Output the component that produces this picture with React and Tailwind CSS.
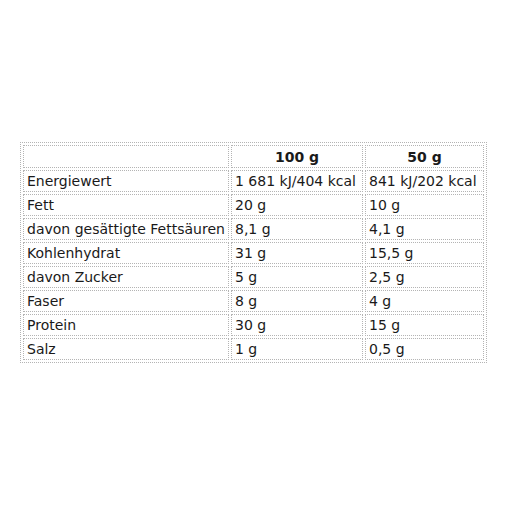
import React from "react";

const rows = [
  ["Energiewert", "1 681 kJ/404 kcal", "841 kJ/202 kcal"],
  ["Fett", "20 g", "10 g"],
  ["davon gesättigte Fettsäuren", "8,1 g", "4,1 g"],
  ["Kohlenhydrat", "31 g", "15,5 g"],
  ["davon Zucker", "5 g", "2,5 g"],
  ["Faser", "8 g", "4 g"],
  ["Protein", "30 g", "15 g"],
  ["Salz", "1 g", "0,5 g"],
];

const cell =
  "border border-dotted border-[#b4b4b4] px-[3px] py-0 leading-[18px] whitespace-nowrap";

const App = () => {
  return (
    <div
      className="w-[512px] h-[512px] bg-white pt-[142px] pl-[20px] text-[14px] text-[#1a1a1a]"
      style={{ fontFamily: '"DejaVu Sans", Verdana, sans-serif' }}
    >
      <table className="w-[467px] border border-dotted border-[#b4b4b4] border-separate border-spacing-[2px]">
        <tbody>
          <tr>
            <td className={`${cell} w-[206px] h-[23px]`}></td>
            <td className={`${cell} w-[132px] h-[23px] text-center font-bold`}>100 g</td>
            <td className={`${cell} h-[23px] text-center font-bold`}>50 g</td>
          </tr>
          {rows.map((r) => (
            <tr key={r[0]}>
              <td className={`${cell} h-[22px]`}>{r[0]}</td>
              <td className={`${cell} h-[22px]`}>{r[1]}</td>
              <td className={`${cell} h-[22px]`}>{r[2]}</td>
            </tr>
          ))}
        </tbody>
      </table>
    </div>
  );
};

export default App;
